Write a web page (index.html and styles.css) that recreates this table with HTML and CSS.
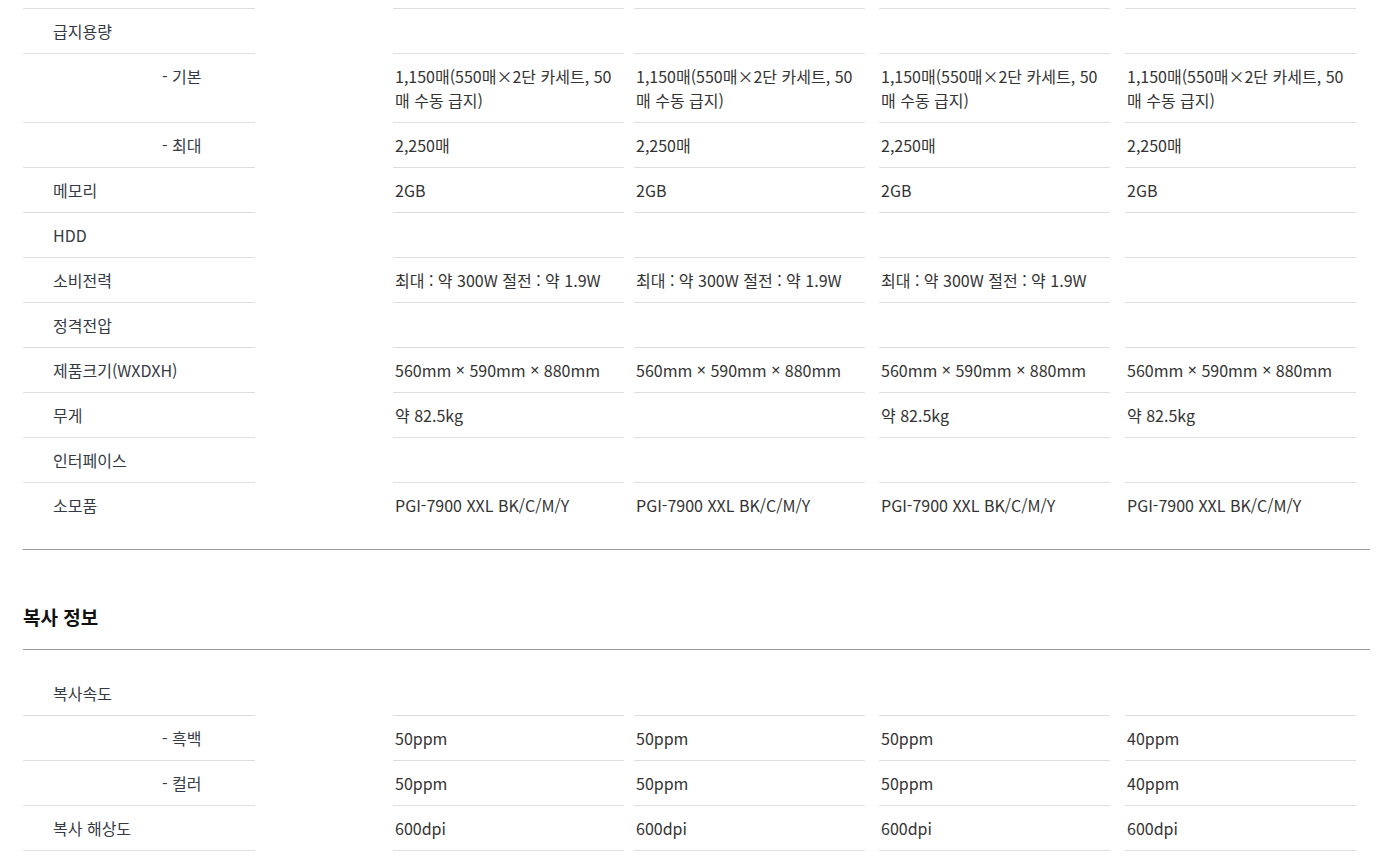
FILE: index.html
```html
<!DOCTYPE html>
<html lang="ko">
<head>
<meta charset="utf-8">
<title>제품 사양</title>
<link rel="stylesheet" href="styles.css">
</head>
<body>
<div class="page">
  <section class="spec spec-first">
    <div class="row first">
      <div class="cell label">급지용량</div>
      <div class="cell val"></div><div class="cell val"></div><div class="cell val"></div><div class="cell val"></div>
    </div>
    <div class="row">
      <div class="cell label sub">- 기본</div>
      <div class="cell val">1,150매(550매×2단 카세트, 50매 수동 급지)</div>
      <div class="cell val">1,150매(550매×2단 카세트, 50매 수동 급지)</div>
      <div class="cell val">1,150매(550매×2단 카세트, 50매 수동 급지)</div>
      <div class="cell val">1,150매(550매×2단 카세트, 50매 수동 급지)</div>
    </div>
    <div class="row">
      <div class="cell label sub">- 최대</div>
      <div class="cell val">2,250매</div><div class="cell val">2,250매</div><div class="cell val">2,250매</div><div class="cell val">2,250매</div>
    </div>
    <div class="row">
      <div class="cell label">메모리</div>
      <div class="cell val">2GB</div><div class="cell val">2GB</div><div class="cell val">2GB</div><div class="cell val">2GB</div>
    </div>
    <div class="row">
      <div class="cell label">HDD</div>
      <div class="cell val"></div><div class="cell val"></div><div class="cell val"></div><div class="cell val"></div>
    </div>
    <div class="row">
      <div class="cell label">소비전력</div>
      <div class="cell val">최대 : 약 300W 절전 : 약 1.9W</div>
      <div class="cell val">최대 : 약 300W 절전 : 약 1.9W</div>
      <div class="cell val">최대 : 약 300W 절전 : 약 1.9W</div>
      <div class="cell val"></div>
    </div>
    <div class="row">
      <div class="cell label">정격전압</div>
      <div class="cell val"></div><div class="cell val"></div><div class="cell val"></div><div class="cell val"></div>
    </div>
    <div class="row">
      <div class="cell label">제품크기(WXDXH)</div>
      <div class="cell val">560mm <span class="times">×</span> 590mm <span class="times">×</span> 880mm</div>
      <div class="cell val">560mm <span class="times">×</span> 590mm <span class="times">×</span> 880mm</div>
      <div class="cell val">560mm <span class="times">×</span> 590mm <span class="times">×</span> 880mm</div>
      <div class="cell val">560mm <span class="times">×</span> 590mm <span class="times">×</span> 880mm</div>
    </div>
    <div class="row">
      <div class="cell label">무게</div>
      <div class="cell val">약 82.5kg</div>
      <div class="cell val"></div>
      <div class="cell val">약 82.5kg</div>
      <div class="cell val">약 82.5kg</div>
    </div>
    <div class="row">
      <div class="cell label">인터페이스</div>
      <div class="cell val"></div><div class="cell val"></div><div class="cell val"></div><div class="cell val"></div>
    </div>
    <div class="row last">
      <div class="cell label">소모품</div>
      <div class="cell val">PGI-7900 XXL BK/C/M/Y</div>
      <div class="cell val">PGI-7900 XXL BK/C/M/Y</div>
      <div class="cell val">PGI-7900 XXL BK/C/M/Y</div>
      <div class="cell val">PGI-7900 XXL BK/C/M/Y</div>
    </div>
  </section>

  <h2 class="section-title">복사 정보</h2>

  <section class="spec spec-copy">
    <div class="row">
      <div class="cell label">복사속도</div>
      <div class="cell val"></div><div class="cell val"></div><div class="cell val"></div><div class="cell val"></div>
    </div>
    <div class="row">
      <div class="cell label sub">- 흑백</div>
      <div class="cell val">50ppm</div><div class="cell val">50ppm</div><div class="cell val">50ppm</div><div class="cell val">40ppm</div>
    </div>
    <div class="row">
      <div class="cell label sub">- 컬러</div>
      <div class="cell val">50ppm</div><div class="cell val">50ppm</div><div class="cell val">50ppm</div><div class="cell val">40ppm</div>
    </div>
    <div class="row">
      <div class="cell label">복사 해상도</div>
      <div class="cell val">600dpi</div><div class="cell val">600dpi</div><div class="cell val">600dpi</div><div class="cell val">600dpi</div>
    </div>
  </section>
</div>
</body>
</html>
```

FILE: styles.css
```css
html, body {
  margin: 0;
  padding: 0;
  background: #fff;
}

body {
  font-family: "Noto Sans CJK KR", "Noto Sans", sans-serif;
  font-size: 16px;
  color: #333;
}

.page {
  width: 1347px;
  margin-left: 23px;
  padding-top: 8px;
}

.spec-first {
  padding-bottom: 22px;
  border-bottom: 1px solid #999;
}

.spec-copy {
  padding-top: 21px;
  border-top: 1px solid #999;
}

.section-title {
  margin: 50px 0 15px;
  font-size: 19px;
  line-height: 34px;
  font-weight: 700;
  color: #111;
}

.row {
  display: grid;
  grid-template-columns: 232px 369px 241px 245px 246px;
}

.cell {
  padding: 10px 0;
  min-height: 24px;
  line-height: 24px;
  border-bottom: 1px solid #dcdee2;
  word-break: break-all;
}

.row.first .cell {
  border-top: 1px solid #dcdee2;
}

.row.last .cell {
  border-bottom: none;
}

.label {
  padding-left: 30px;
  color: #343a45;
}

.label.sub {
  padding-left: 139px;
}

.val {
  width: 231px;
  box-sizing: border-box;
  padding-left: 2px;
  padding-right: 0;
}

.times {
  display: inline-block;
  height: 24px;
  line-height: 24px;
  vertical-align: top;
  font-family: "Noto Sans", "Liberation Sans", sans-serif;
}

.val:nth-child(2) { margin-left: 138px; }
.val:nth-child(3) { margin-left: 10px; }
.val:nth-child(4) { margin-left: 14px; }
.val:nth-child(5) { margin-left: 15px; }
```
